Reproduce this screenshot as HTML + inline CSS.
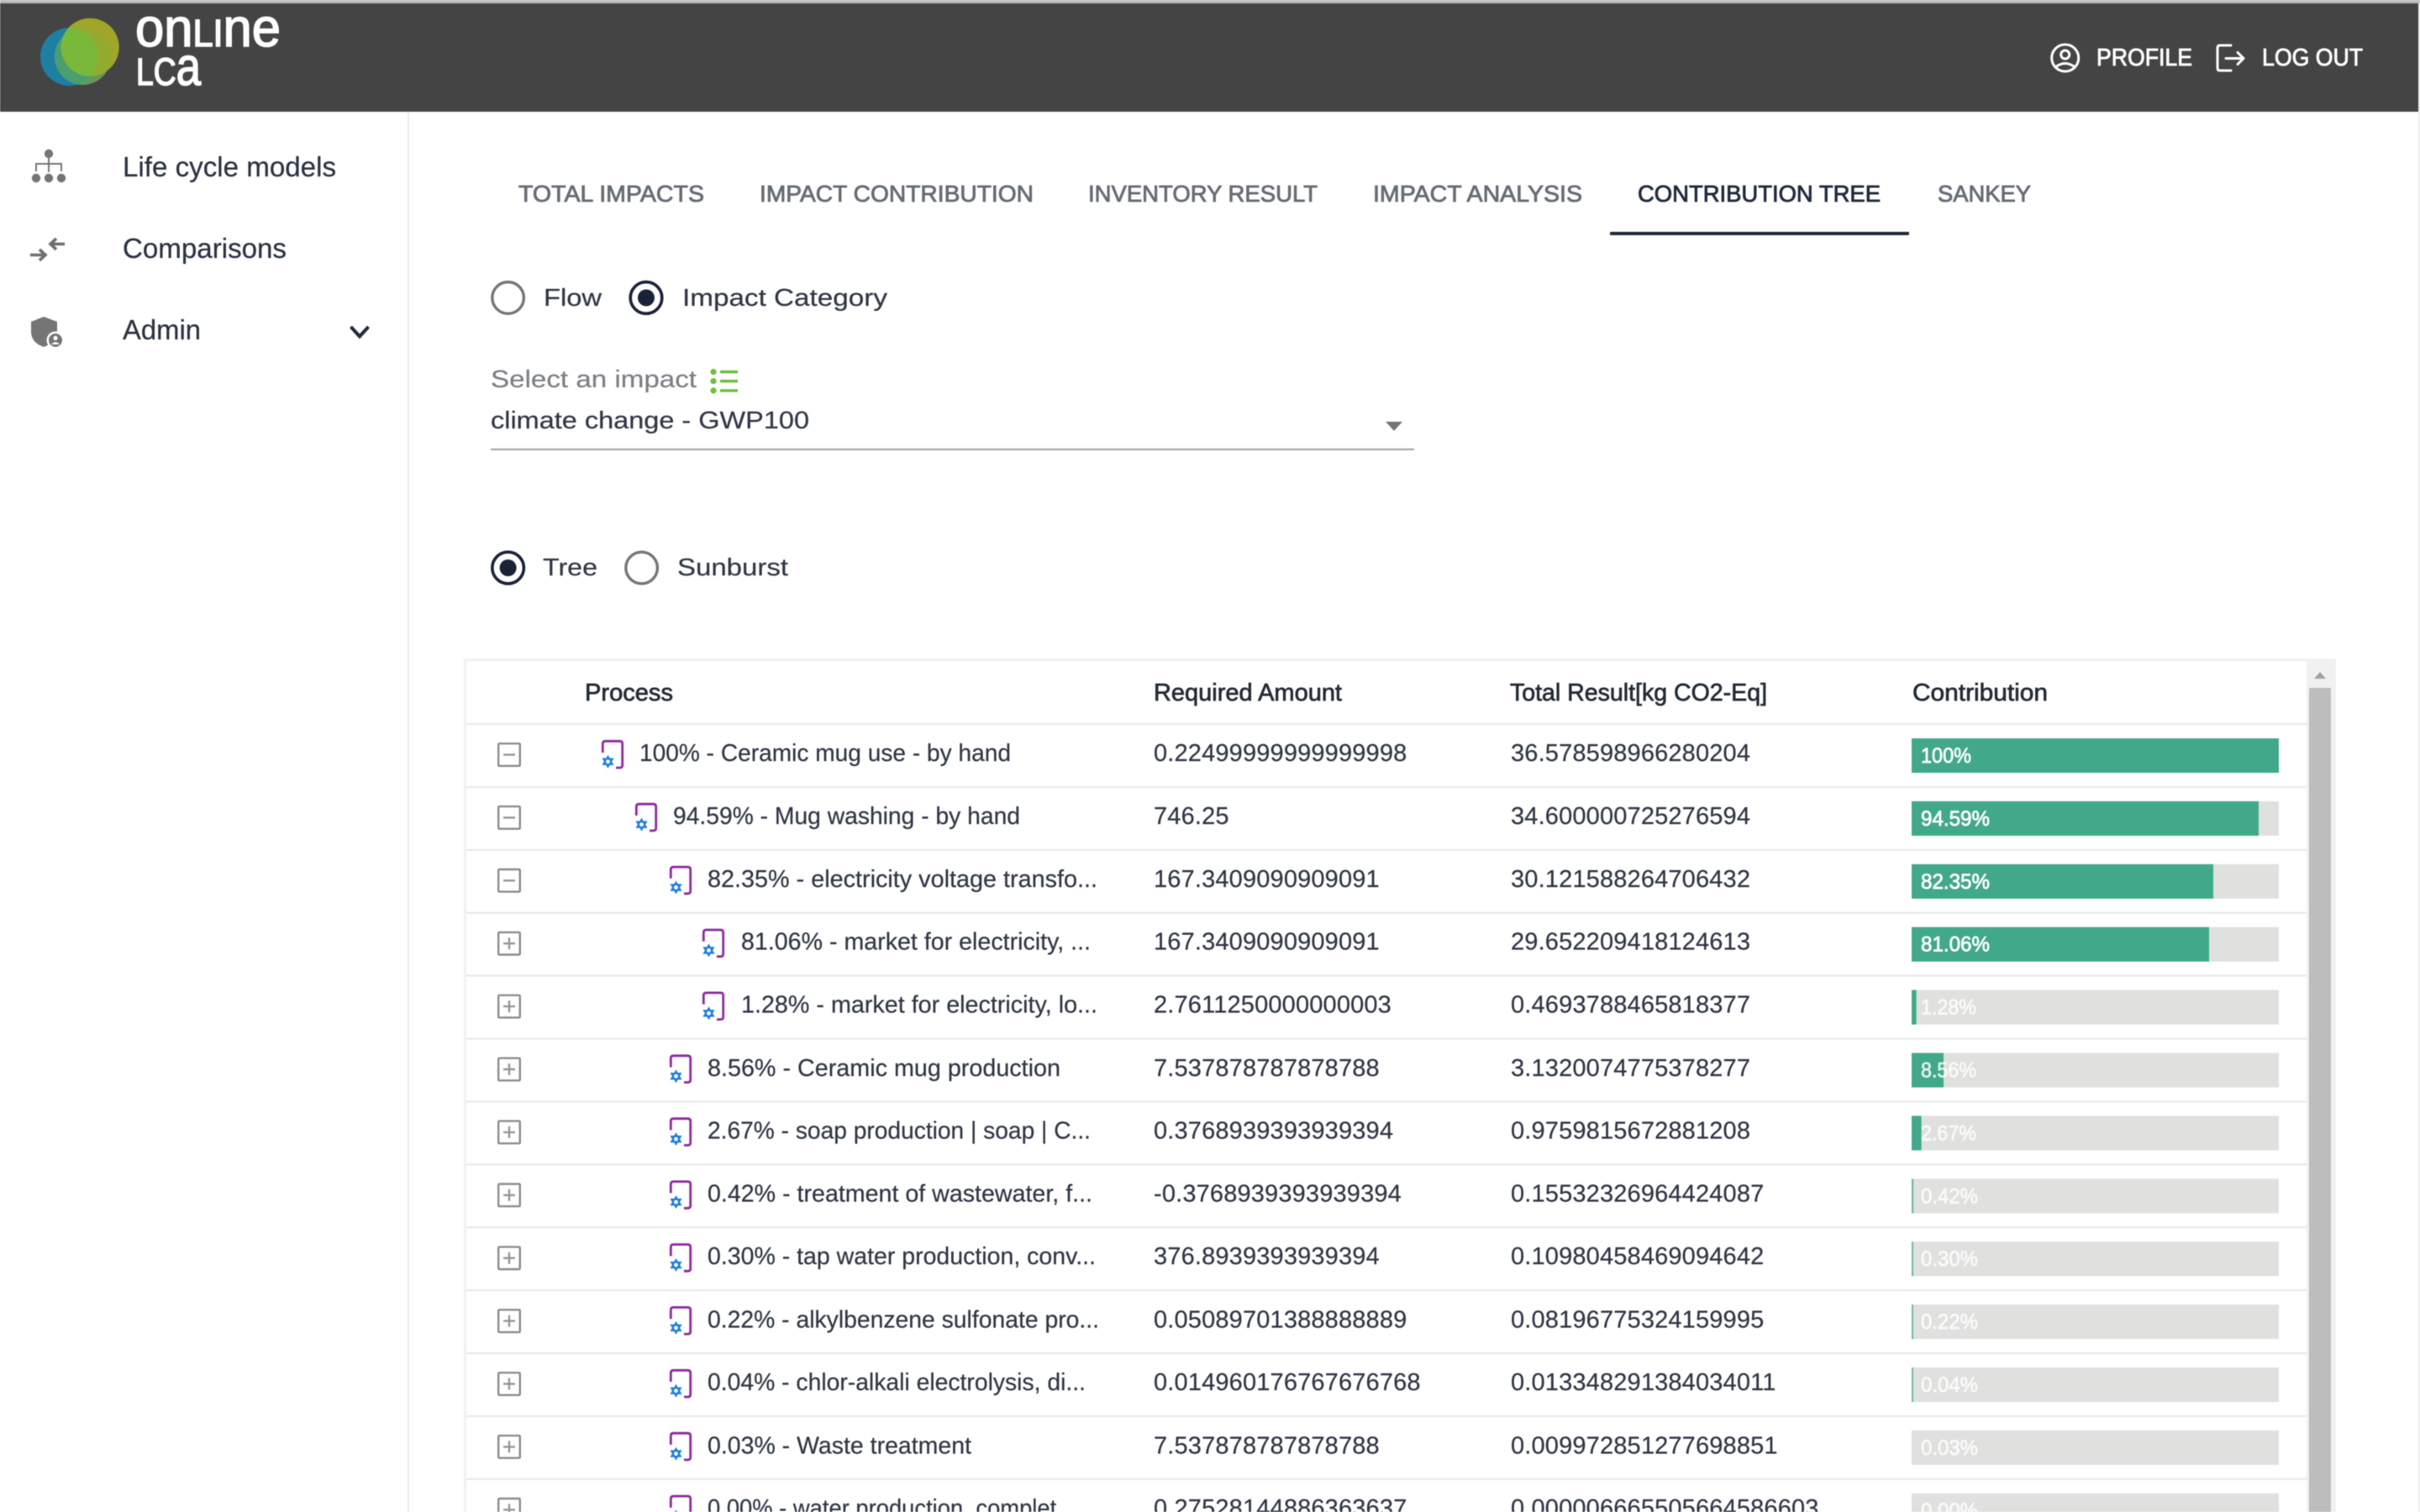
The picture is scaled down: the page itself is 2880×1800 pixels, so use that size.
<!DOCTYPE html>
<html lang="en">
<head>
<meta charset="utf-8">
<title>Online LCA - Contribution Tree</title>
<style>
html,body{margin:0;padding:0;background:#fff;width:2880px;height:1800px;overflow:hidden}
svg{display:block;filter:blur(.45px)}
text{font-family:"Liberation Sans",Arial,sans-serif;font-size:29px;fill:#2f3644;stroke:#2f3644;stroke-width:.22}
text[x="1373"],text[x="1798"]{letter-spacing:.16px}
.nav{font-size:33px;fill:#2a3242;stroke:#2a3242;stroke-width:.25}
.tab{font-size:28px;fill:#666c75;stroke:#666c75;stroke-width:.85}
.act{fill:#1f2a3c;stroke:#1f2a3c}
.hd{fill:#fff;stroke:#fff;stroke-width:.85;font-size:29px}
.th{fill:#222a35;stroke:#222a35;stroke-width:.7}
.lb{font-size:25px;fill:#fff;stroke:#fff;stroke-width:.75}
.lo{opacity:.85}
.logo{fill:#fff;stroke:#fff;stroke-width:1.6;font-size:64px}
.sel{fill:#7b7f85;stroke:#7b7f85}
</style>
</head>
<body>
<svg width="2880" height="1800" viewBox="0 0 2880 1800" xmlns="http://www.w3.org/2000/svg">
<defs>
  <clipPath id="cb"><circle cx="82.5" cy="67.5" r="34.5"/></clipPath>
  <clipPath id="co"><circle cx="107.2" cy="56.2" r="34.5"/></clipPath>
  <g id="p">
    <path d="M1.3 15V4.5Q1.3 1.3 4.5 1.3H21.5Q24.7 1.3 24.7 4.5V30Q24.7 33 21.5 33H17" fill="none" stroke="#8e2a9e" stroke-width="2.8"/>
    <path d="M7.5 17.7L14.6 29.9H0.4ZM7.5 33.7L0.4 21.5H14.6Z" fill="#1e7fdc"/>
    <circle cx="7.5" cy="25.7" r="2.4" fill="#fff"/>
  </g>
  <g id="minus">
    <rect x="593.2" y="885.2" width="25.6" height="26.6" rx="1" fill="#fff" stroke="#8c8c8c" stroke-width="2.4"/>
    <path d="M599 898.5H613" stroke="#969696" stroke-width="2.4"/>
  </g>
  <g id="plus">
    <rect x="593.2" y="885.2" width="25.6" height="26.6" rx="1" fill="#fff" stroke="#8c8c8c" stroke-width="2.4"/>
    <path d="M599 898.5H613M606 891.5V905.5" stroke="#969696" stroke-width="2.4"/>
  </g>
</defs>

<rect width="2880" height="1800" fill="#fff"/>

<!-- header -->
<rect width="2880" height="4" fill="#bdbdbd"/>
<rect y="4" width="2878" height="129" fill="#444444"/>
<rect x="2878" y="4" width="2" height="1796" fill="#ececec"/>

<!-- logo -->
<circle cx="82.5" cy="67.5" r="34.5" fill="#1e7fa5"/>
<circle cx="98.5" cy="67.5" r="33.5" fill="#67985a"/>
<g clip-path="url(#cb)"><circle cx="98.5" cy="67.5" r="33.5" fill="#4b9f6e"/></g>
<circle cx="107.2" cy="56.2" r="34.5" fill="#a0a62a"/>
<g clip-path="url(#co)"><circle cx="98.5" cy="67.5" r="33.5" fill="#93aa30"/>
  <g clip-path="url(#cb)"><rect x="40" y="20" width="110" height="90" fill="#7ab83a"/></g>
</g>
<text class="logo" x="161" y="55" textLength="173" lengthAdjust="spacingAndGlyphs">on<tspan style="font-size:45px">LI</tspan>ne</text>
<text class="logo" x="162" y="101" textLength="77" lengthAdjust="spacingAndGlyphs"><tspan style="font-size:45px">LC</tspan>a</text>

<!-- header right -->
<g fill="none" stroke="#fff" stroke-width="3" stroke-linecap="round" stroke-linejoin="round">
  <circle cx="2457.7" cy="69" r="16"/>
  <circle cx="2457.7" cy="65" r="5"/>
  <path d="M2446 80Q2457.7 71 2469.5 80"/>
  <path d="M2655 54H2642Q2639 54 2639 57V81Q2639 84 2642 84H2655"/>
  <path d="M2649 69.5H2670M2663 62.5L2670 69.5L2663 76.5"/>
</g>
<text class="hd" x="2495" y="78" textLength="114" lengthAdjust="spacingAndGlyphs">PROFILE</text>
<text class="hd" x="2692" y="78" textLength="120" lengthAdjust="spacingAndGlyphs">LOG OUT</text>

<!-- sidebar -->
<rect x="485" y="133" width="2" height="1667" fill="#ececec"/>
<g fill="#757575">
  <circle cx="58" cy="183" r="5.2"/><circle cx="43" cy="212" r="5.2"/><circle cx="58" cy="212" r="5.2"/><circle cx="73" cy="212" r="5.2"/>
  <path d="M58 185V205M43 204V195H73V204" fill="none" stroke="#757575" stroke-width="2"/>
  <path d="M77 290.5H60M67 284L60 290.5L67 297" fill="none" stroke="#6f6f6f" stroke-width="3.6"/>
  <path d="M36 303.5H53M47 297L54 303.5L47 310" fill="none" stroke="#6f6f6f" stroke-width="3.6"/>
  <path d="M52 377L37 383V395C37 404 43 410 52 413C61 410 68 404 68 395V383Z"/>
  <circle cx="66" cy="405" r="10.5" fill="#fff"/>
  <circle cx="66" cy="405" r="8"/>
  <circle cx="66" cy="402.5" r="2.6" fill="#fff"/>
  <path d="M61 410Q66 404.5 71 410Z" fill="#fff"/>
</g>
<text class="nav" x="146" y="210" textLength="254" lengthAdjust="spacingAndGlyphs">Life cycle models</text>
<text class="nav" x="146" y="307" textLength="195" lengthAdjust="spacingAndGlyphs">Comparisons</text>
<text class="nav" x="146" y="404" textLength="93" lengthAdjust="spacingAndGlyphs">Admin</text>
<path d="M417.5 389L428 400.5L438.5 389" fill="none" stroke="#1f2a3a" stroke-width="4"/>

<!-- tabs -->
<text class="tab" x="617" y="240" textLength="221" lengthAdjust="spacingAndGlyphs">TOTAL IMPACTS</text>
<text class="tab" x="904" y="240" textLength="326" lengthAdjust="spacingAndGlyphs">IMPACT CONTRIBUTION</text>
<text class="tab" x="1295" y="240" textLength="273" lengthAdjust="spacingAndGlyphs">INVENTORY RESULT</text>
<text class="tab" x="1634" y="240" textLength="249" lengthAdjust="spacingAndGlyphs">IMPACT ANALYSIS</text>
<text class="tab act" x="1949" y="240" textLength="289" lengthAdjust="spacingAndGlyphs">CONTRIBUTION TREE</text>
<text class="tab" x="2306" y="240" textLength="111" lengthAdjust="spacingAndGlyphs">SANKEY</text>
<rect x="1916" y="276" width="356" height="4" rx="1" fill="#1f2a3c"/>

<!-- radios 1 -->
<circle cx="604.6" cy="354.5" r="18.8" fill="none" stroke="#757575" stroke-width="3.4"/>
<text x="647" y="364" textLength="69" lengthAdjust="spacingAndGlyphs">Flow</text>
<circle cx="769" cy="354.5" r="18.8" fill="none" stroke="#1a2238" stroke-width="3.6"/>
<circle cx="769" cy="354.5" r="10" fill="#1a2238"/>
<text x="812" y="364" textLength="244" lengthAdjust="spacingAndGlyphs">Impact Category</text>

<!-- select -->
<text class="sel" x="584" y="461" textLength="245" lengthAdjust="spacingAndGlyphs">Select an impact</text>
<g fill="#6cbf3a">
  <circle cx="849" cy="442.7" r="3.6"/><circle cx="849" cy="453.7" r="3.6"/><circle cx="849" cy="465" r="3.6"/>
  <rect x="857" y="441" width="21" height="3.4"/><rect x="857" y="452" width="21" height="3.4"/><rect x="857" y="463.3" width="21" height="3.4"/>
</g>
<text x="584" y="510" textLength="379" lengthAdjust="spacingAndGlyphs">climate change - GWP100</text>
<rect x="584" y="534" width="1099" height="2" fill="#a0a0a0"/>
<path d="M1649 502H1669L1659 513Z" fill="#757575"/>

<!-- radios 2 -->
<circle cx="604.6" cy="676" r="18.8" fill="none" stroke="#1a2238" stroke-width="3.6"/>
<circle cx="604.6" cy="676" r="10" fill="#1a2238"/>
<text x="646" y="685" textLength="65" lengthAdjust="spacingAndGlyphs">Tree</text>
<circle cx="763.6" cy="676" r="18.8" fill="none" stroke="#757575" stroke-width="3.4"/>
<text x="806" y="685" textLength="132" lengthAdjust="spacingAndGlyphs">Sunburst</text>

<!-- table frame -->
<rect x="552" y="784" width="2228" height="3" fill="#f1f1f1"/>
<rect x="552" y="784" width="3" height="1016" fill="#f1f1f1"/>
<rect x="2745" y="784" width="35" height="1016" fill="#f1f1f1"/>
<path d="M2754 808L2761 800L2768 808Z" fill="#a3a3a3"/>
<rect x="2748" y="819" width="26" height="981" fill="#bdbdbd"/>

<text class="th" x="696" y="834" textLength="105" lengthAdjust="spacingAndGlyphs">Process</text>
<text class="th" x="1373" y="834" textLength="224" lengthAdjust="spacingAndGlyphs" style="letter-spacing:0">Required Amount</text>
<text class="th" x="1797" y="834" textLength="306" lengthAdjust="spacingAndGlyphs">Total Result[kg CO2-Eq]</text>
<text class="th" x="2276" y="834" textLength="161" lengthAdjust="spacingAndGlyphs">Contribution</text>

<!-- row 0 -->
<g>
  <rect x="555" y="861" width="2190" height="2" fill="#e8e8e8"/>
  <use href="#minus"/><use href="#p" x="716" y="881"/>
  <text x="761" y="906" textLength="442" lengthAdjust="spacingAndGlyphs">100% - Ceramic mug use - by hand</text>
  <text x="1373" y="906">0.22499999999999998</text>
  <text x="1798" y="906">36.578598966280204</text>
  <rect x="2275" y="879" width="437" height="41" fill="#e0e0de"/>
  <rect x="2275" y="879" width="437" height="41" fill="#41a889"/>
  <text class="lb" x="2286" y="908" textLength="60" lengthAdjust="spacingAndGlyphs">100%</text>
</g>
<!-- row 1 -->
<g transform="translate(0,74.9)">
  <rect x="555" y="861" width="2190" height="2" fill="#e8e8e8"/>
  <use href="#minus"/><use href="#p" x="756" y="881"/>
  <text x="801" y="906" textLength="413" lengthAdjust="spacingAndGlyphs">94.59% - Mug washing - by hand</text>
  <text x="1373" y="906">746.25</text>
  <text x="1798" y="906">34.600000725276594</text>
  <rect x="2275" y="879" width="437" height="41" fill="#e0e0de"/>
  <rect x="2275" y="879" width="413" height="41" fill="#41a889"/>
  <text class="lb" x="2286" y="908" textLength="82" lengthAdjust="spacingAndGlyphs">94.59%</text>
</g>
<!-- row 2 -->
<g transform="translate(0,149.8)">
  <rect x="555" y="861" width="2190" height="2" fill="#e8e8e8"/>
  <use href="#minus"/><use href="#p" x="797" y="881"/>
  <text x="842" y="906" textLength="464" lengthAdjust="spacingAndGlyphs">82.35% - electricity voltage transfo...</text>
  <text x="1373" y="906">167.3409090909091</text>
  <text x="1798" y="906">30.121588264706432</text>
  <rect x="2275" y="879" width="437" height="41" fill="#e0e0de"/>
  <rect x="2275" y="879" width="359" height="41" fill="#41a889"/>
  <text class="lb" x="2286" y="908" textLength="82" lengthAdjust="spacingAndGlyphs">82.35%</text>
</g>
<!-- row 3 -->
<g transform="translate(0,224.7)">
  <rect x="555" y="861" width="2190" height="2" fill="#e8e8e8"/>
  <use href="#plus"/><use href="#p" x="836" y="881"/>
  <text x="882" y="906" textLength="416" lengthAdjust="spacingAndGlyphs">81.06% - market for electricity, ...</text>
  <text x="1373" y="906">167.3409090909091</text>
  <text x="1798" y="906">29.652209418124613</text>
  <rect x="2275" y="879" width="437" height="41" fill="#e0e0de"/>
  <rect x="2275" y="879" width="354" height="41" fill="#41a889"/>
  <text class="lb" x="2286" y="908" textLength="82" lengthAdjust="spacingAndGlyphs">81.06%</text>
</g>
<!-- row 4 -->
<g transform="translate(0,299.6)">
  <rect x="555" y="861" width="2190" height="2" fill="#e8e8e8"/>
  <use href="#plus"/><use href="#p" x="836" y="881"/>
  <text x="882" y="906" textLength="424" lengthAdjust="spacingAndGlyphs">1.28% - market for electricity, lo...</text>
  <text x="1373" y="906">2.7611250000000003</text>
  <text x="1798" y="906">0.4693788465818377</text>
  <rect x="2275" y="879" width="437" height="41" fill="#e0e0de"/>
  <rect x="2275" y="879" width="5.6" height="41" fill="#41a889"/>
  <text class="lb lo" x="2286" y="908" textLength="66" lengthAdjust="spacingAndGlyphs">1.28%</text>
</g>
<!-- row 5 -->
<g transform="translate(0,374.5)">
  <rect x="555" y="861" width="2190" height="2" fill="#e8e8e8"/>
  <use href="#plus"/><use href="#p" x="797" y="881"/>
  <text x="842" y="906.5" textLength="420" lengthAdjust="spacingAndGlyphs">8.56% - Ceramic mug production</text>
  <text x="1373" y="906.5">7.537878787878788</text>
  <text x="1798" y="906.5">3.1320074775378277</text>
  <rect x="2275" y="879" width="437" height="41" fill="#e0e0de"/>
  <rect x="2275" y="879" width="38" height="41" fill="#41a889"/>
  <text class="lb lo" x="2286" y="908" textLength="66" lengthAdjust="spacingAndGlyphs">8.56%</text>
</g>
<!-- row 6 -->
<g transform="translate(0,449.4)">
  <rect x="555" y="861" width="2190" height="2" fill="#e8e8e8"/>
  <use href="#plus"/><use href="#p" x="797" y="881"/>
  <text x="842" y="906" textLength="456" lengthAdjust="spacingAndGlyphs">2.67% - soap production | soap | C...</text>
  <text x="1373" y="906">0.3768939393939394</text>
  <text x="1798" y="906">0.9759815672881208</text>
  <rect x="2275" y="879" width="437" height="41" fill="#e0e0de"/>
  <rect x="2275" y="879" width="11.6" height="41" fill="#41a889"/>
  <text class="lb lo" x="2286" y="908" textLength="66" lengthAdjust="spacingAndGlyphs">2.67%</text>
</g>
<!-- row 7 -->
<g transform="translate(0,524.3)">
  <rect x="555" y="861" width="2190" height="2" fill="#e8e8e8"/>
  <use href="#plus"/><use href="#p" x="797" y="881"/>
  <text x="842" y="906" textLength="458" lengthAdjust="spacingAndGlyphs">0.42% - treatment of wastewater, f...</text>
  <text x="1373" y="906">-0.3768939393939394</text>
  <text x="1798" y="906">0.15532326964424087</text>
  <rect x="2275" y="879" width="437" height="41" fill="#e0e0de"/>
  <rect x="2275" y="879" width="2.2" height="41" fill="#6bb8a3"/>
  <text class="lb lo" x="2286" y="908" textLength="68" lengthAdjust="spacingAndGlyphs">0.42%</text>
</g>
<!-- row 8 -->
<g transform="translate(0,599.2)">
  <rect x="555" y="861" width="2190" height="2" fill="#e8e8e8"/>
  <use href="#plus"/><use href="#p" x="797" y="881"/>
  <text x="842" y="906" textLength="462" lengthAdjust="spacingAndGlyphs">0.30% - tap water production, conv...</text>
  <text x="1373" y="906">376.8939393939394</text>
  <text x="1798" y="906">0.10980458469094642</text>
  <rect x="2275" y="879" width="437" height="41" fill="#e0e0de"/>
  <rect x="2275" y="879" width="2" height="41" fill="#6bb8a3"/>
  <text class="lb lo" x="2286" y="908" textLength="68" lengthAdjust="spacingAndGlyphs">0.30%</text>
</g>
<!-- row 9 -->
<g transform="translate(0,674.1)">
  <rect x="555" y="861" width="2190" height="2" fill="#e8e8e8"/>
  <use href="#plus"/><use href="#p" x="797" y="881"/>
  <text x="842" y="906.5" textLength="466" lengthAdjust="spacingAndGlyphs">0.22% - alkylbenzene sulfonate pro...</text>
  <text x="1373" y="906.5">0.05089701388888889</text>
  <text x="1798" y="906.5">0.08196775324159995</text>
  <rect x="2275" y="879" width="437" height="41" fill="#e0e0de"/>
  <rect x="2275" y="879" width="2" height="41" fill="#6bb8a3"/>
  <text class="lb lo" x="2286" y="908" textLength="68" lengthAdjust="spacingAndGlyphs">0.22%</text>
</g>
<!-- row 10 -->
<g transform="translate(0,749)">
  <rect x="555" y="861" width="2190" height="2" fill="#e8e8e8"/>
  <use href="#plus"/><use href="#p" x="797" y="881"/>
  <text x="842" y="906" textLength="450" lengthAdjust="spacingAndGlyphs">0.04% - chlor-alkali electrolysis, di...</text>
  <text x="1373" y="906">0.014960176767676768</text>
  <text x="1798" y="906">0.013348291384034011</text>
  <rect x="2275" y="879" width="437" height="41" fill="#e0e0de"/>
  <rect x="2275" y="879" width="2" height="41" fill="#6bb8a3"/>
  <text class="lb lo" x="2286" y="908" textLength="68" lengthAdjust="spacingAndGlyphs">0.04%</text>
</g>
<!-- row 11 -->
<g transform="translate(0,823.9)">
  <rect x="555" y="861" width="2190" height="2" fill="#e8e8e8"/>
  <use href="#plus"/><use href="#p" x="797" y="881"/>
  <text x="842" y="906.5" textLength="314" lengthAdjust="spacingAndGlyphs">0.03% - Waste treatment</text>
  <text x="1373" y="906.5">7.537878787878788</text>
  <text x="1798" y="906.5">0.009972851277698851</text>
  <rect x="2275" y="879" width="437" height="41" fill="#e0e0de"/>
  <text class="lb lo" x="2286" y="908" textLength="68" lengthAdjust="spacingAndGlyphs">0.03%</text>
</g>
<!-- row 12 -->
<g transform="translate(0,898.8)">
  <rect x="555" y="861" width="2190" height="2" fill="#e8e8e8"/>
  <use href="#plus"/><use href="#p" x="797" y="881"/>
  <text x="842" y="906" textLength="438" lengthAdjust="spacingAndGlyphs">0.00% - water production, complet...</text>
  <text x="1373" y="906">0.27528144886363637</text>
  <text x="1798" y="906">0.000006665505664586603</text>
  <rect x="2275" y="879" width="437" height="41" fill="#e0e0de"/>
  <text class="lb lo" x="2286" y="908" textLength="68" lengthAdjust="spacingAndGlyphs">0.00%</text>
</g>
</svg>
</body>
</html>
